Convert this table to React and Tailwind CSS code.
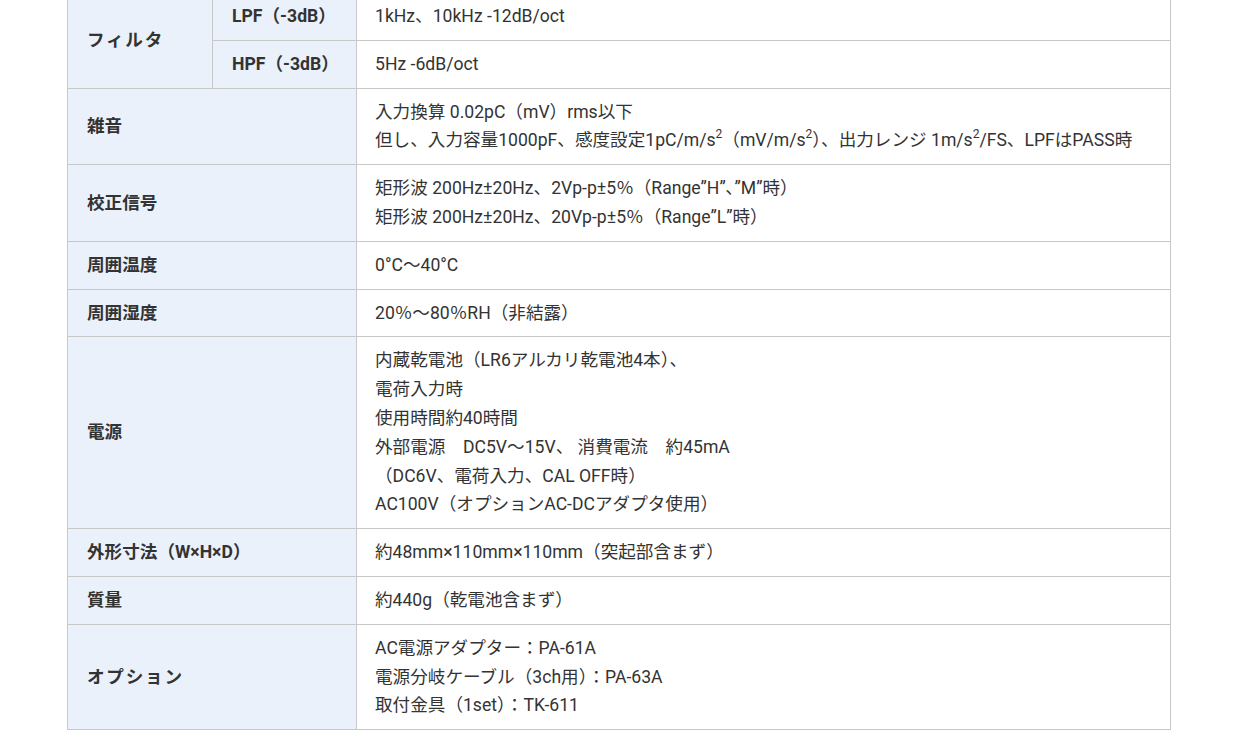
const th = 'border border-[#c8c8c8] bg-[#eaf1fb] px-[19px] py-[9px] text-left align-middle font-bold';
const td = 'border border-[#c8c8c8] bg-white pl-[18px] pr-[19px] py-[9px] text-left align-middle font-normal';

function Lines({ items }) {
  return items.map((line, i) => <div key={i}>{line}</div>);
}

const rows = [
  {
    label: '雑音',
    value: [
      '入力換算 0.02pC（mV）rms以下',
      <>
        但し、入力容量1000pF、感度設定1pC/m/s<sup>2</sup>（mV/m/s<sup>2</sup>）、出力レンジ 1m/s<sup>2</sup>/FS、LPFはPASS時
      </>,
    ],
  },
  {
    label: '校正信号',
    value: ['矩形波 200Hz±20Hz、2Vp-p±5％（Range”H”､”M”時）', '矩形波 200Hz±20Hz、20Vp-p±5％（Range”L”時）'],
  },
  { label: '周囲温度', value: ['0°C～40°C'] },
  { label: '周囲湿度', value: ['20％～80％RH（非結露）'] },
  {
    label: '電源',
    value: [
      '内蔵乾電池（LR6アルカリ乾電池4本）、',
      '電荷入力時',
      '使用時間約40時間',
      '外部電源　DC5V～15V、 消費電流　約45mA',
      '（DC6V、電荷入力、CAL OFF時）',
      'AC100V（オプションAC-DCアダプタ使用）',
    ],
  },
  { label: '外形寸法（W×H×D）', value: ['約48mm×110mm×110mm（突起部含まず）'] },
  { label: '質量', value: ['約440g（乾電池含まず）'] },
  {
    label: 'オプション',
    value: ['AC電源アダプター：PA-61A', '電源分岐ケーブル（3ch用）：PA-63A', '取付金具（1set）：TK-611'],
  },
];

export default function App() {
  return (
    <div
      className="h-[737px] overflow-hidden bg-white text-[17.6px] leading-[28.8px] text-[#333]"
      style={{ fontFamily: 'Roboto, "Noto Sans CJK JP", sans-serif' }}
    >
      <table className="-mt-[8px] ml-[67px] w-[1104px] table-fixed border-collapse [&_sup]:text-[12px] [&_sup]:-top-[0.7em]">
        <colgroup>
          <col className="w-[145px]" />
          <col className="w-[144px]" />
          <col />
        </colgroup>
        <tbody>
          <tr>
            <th rowSpan={2} className={th + ' tracking-[0.1em]'}>
              フィルタ
            </th>
            <th className={th}>LPF（-3dB）</th>
            <td className={td}>1kHz、10kHz -12dB/oct</td>
          </tr>
          <tr>
            <th className={th}>HPF（-3dB）</th>
            <td className={td}>5Hz -6dB/oct</td>
          </tr>
          {rows.map((r) => (
            <tr key={r.label}>
              <th colSpan={2} className={th + (r.label === 'オプション' ? ' tracking-[0.1em]' : '')}>
                {r.label}
              </th>
              <td className={td}>
                <Lines items={r.value} />
              </td>
            </tr>
          ))}
        </tbody>
      </table>
    </div>
  );
}
